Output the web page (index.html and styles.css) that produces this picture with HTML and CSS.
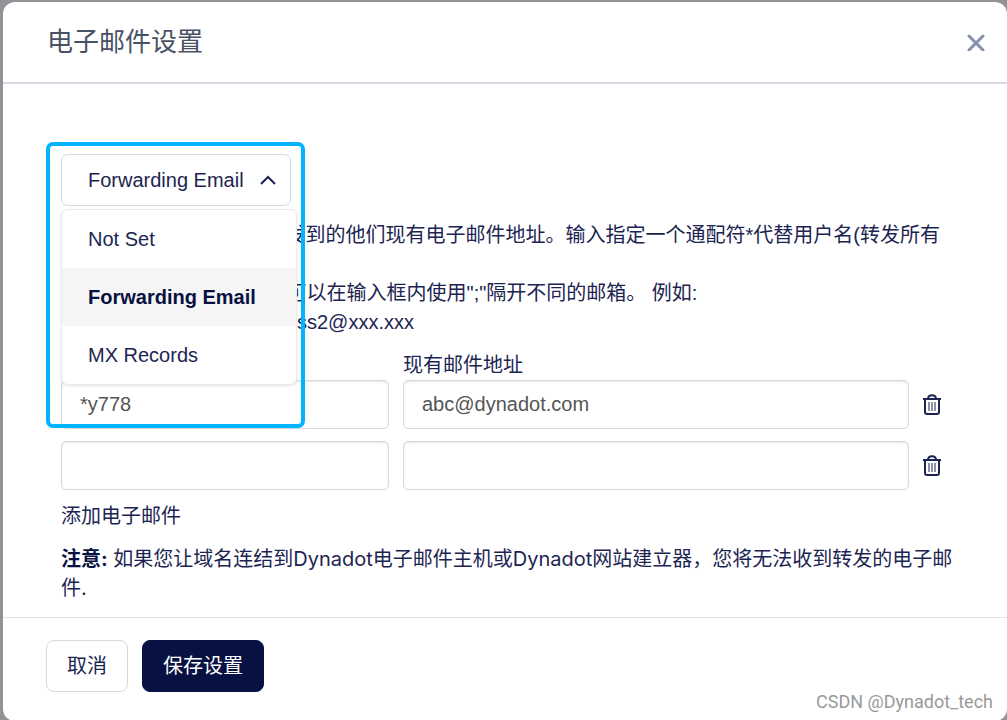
FILE: index.html
```html
<!DOCTYPE html>
<html lang="zh-CN">
<head>
    <meta charset="UTF-8">
    <meta name="viewport" content="width=device-width, initial-scale=1.0">
    <title>电子邮件设置</title>
    <link rel="stylesheet" href="styles.css">
</head>
<body>
    <div class="modal" role="dialog" aria-labelledby="modalTitle">
        <header class="modal-header">
            <h2 id="modalTitle">电子邮件设置</h2>
            <button type="button" class="close" aria-label="关闭">
                <svg width="18" height="18" viewBox="0 0 18 18"><path d="M2 3L16 17M16 3L2 17"/></svg>
            </button>
        </header>

        <form class="modal-form">
            <div class="modal-body">
                <div class="dropdown">
                    <select class="dropdown-select" aria-label="邮件类型">
                        <option>Not Set</option>
                        <option selected>Forwarding Email</option>
                        <option>MX Records</option>
                    </select>
                    <svg class="chevron" width="16" height="10" viewBox="0 0 16 10"><path d="M1 9L8 2L15 9"/></svg>
                    <ul class="dropdown-menu">
                        <li><button type="button">Not Set</button></li>
                        <li><button type="button" class="active">Forwarding Email</button></li>
                        <li><button type="button">MX Records</button></li>
                    </ul>
                    <div class="highlight"></div>
                </div>

                <p class="description">
                    请输入 (用户名) 和想要转发到的他们现有电子邮件地址。输入指定一个通配符*代替用户名(转发所有<br>
                    的邮件)。<br>
                    如果需要转发多个邮箱您 可以在输入框内使用";"隔开不同的邮箱。 例如:<br>
                    address1@xxx.xxx ; address2@xxx.xxx
                </p>

                <div class="email-grid">
                    <label for="user1">用户名</label>
                    <label for="email1" class="wide">现有邮件地址</label>

                    <input type="text" id="user1" value="*y778">
                    <input type="text" id="email1" value="abc@dynadot.com">
                    <button type="button" class="delete" aria-label="删除">
                        <svg width="18" height="22" viewBox="0 0 18 22"><path d="M0 5H18M5 5C5 0 13 0 13 5M2 5V18Q2 20 4 20H14Q16 20 16 18V5"/><path class="thin" d="M6 8V17M9 8V17M12 8V17"/></svg>
                    </button>

                    <input type="text" aria-label="用户名">
                    <input type="text" aria-label="现有邮件地址">
                    <button type="button" class="delete" aria-label="删除">
                        <svg width="18" height="22" viewBox="0 0 18 22"><path d="M0 5H18M5 5C5 0 13 0 13 5M2 5V18Q2 20 4 20H14Q16 20 16 18V5"/><path class="thin" d="M6 8V17M9 8V17M12 8V17"/></svg>
                    </button>
                </div>

                <a href="#" class="add-email">添加电子邮件</a>
                <p class="note"><strong>注意:</strong> 如果您让域名连结到Dynadot电子邮件主机或Dynadot网站建立器，您将无法收到转发的电子邮件.</p>
            </div>

            <footer class="modal-footer">
                <button type="button" class="btn">取消</button>
                <button type="submit" class="btn btn-primary">保存设置</button>
            </footer>
        </form>
        <div class="watermark">CSDN @Dynadot_tech</div>
    </div>
</body>
</html>
```

FILE: styles.css
```css
* {
    box-sizing: border-box;
}
body {
    margin: 0;
    padding: 2px 0 0 3px;
    background: #929297;
    color: #1c2552;
    font-family: "Liberation Sans", "Noto Sans CJK SC", sans-serif;
    font-size: 20px;
    line-height: 29px;
}
button, input, select {
    font: inherit;
    color: inherit;
}
button {
    cursor: pointer;
}
svg {
    display: block;
    fill: none;
    stroke: #1c2552;
    stroke-width: 2;
}
.modal {
    position: relative;
    background: #fff;
    border-radius: 12px;
}
.modal-header {
    display: flex;
    align-items: center;
    justify-content: space-between;
    height: 82px;
    padding: 0 22px 0 44px;
    border-bottom: 2px solid #d5dbe5;
}
.modal-header h2 {
    margin: 0;
    font-size: 26px;
    font-weight: 400;
    color: #495164;
}
.close, .delete {
    padding: 0;
    border: 0;
    background: none;
}
.close svg {
    stroke: #8490aa;
    stroke-width: 3;
    stroke-linecap: round;
}
.modal-body {
    padding: 70px 50px 14px 58px;
}

/* Dropdown */
.dropdown {
    position: relative;
    width: 230px;
}
.dropdown-select {
    display: block;
    width: 100%;
    height: 52px;
    padding: 0 26px;
    border: 1px solid #d3dae3;
    border-radius: 7px;
    background: #fff;
    appearance: none;
}
.chevron {
    position: absolute;
    top: 21px;
    right: 15px;
    pointer-events: none;
}
.dropdown-menu {
    position: absolute;
    top: 55px;
    left: 0;
    width: 236px;
    margin: 0;
    padding: 0;
    list-style: none;
    background: #fff;
    border: 1px solid #ebebed;
    border-radius: 7px;
    box-shadow: 0 1px 3px rgba(0, 0, 0, 0.1);
}
.dropdown-menu button {
    display: block;
    width: 100%;
    height: 58px;
    padding: 0 26px;
    border: 0;
    border-radius: 7px;
    background: none;
    text-align: left;
}
.dropdown-menu .active {
    border-radius: 0;
    background: #f5f5f5;
    color: #071142;
    font-weight: 700;
}
.highlight {
    position: absolute;
    top: -12px;
    left: -15px;
    width: 259px;
    height: 286px;
    border: 4px solid #00b4ff;
    border-radius: 7px;
    pointer-events: none;
}

.description {
    margin: 15px 0 14px;
}

/* Email rows */
.email-grid {
    display: grid;
    grid-template-columns: 328fr 506fr 34px;
    column-gap: 14px;
}
.email-grid .wide {
    grid-column: span 2;
}
.email-grid input {
    width: 100%;
    height: 49px;
    margin-bottom: 12px;
    padding: 0 18px;
    border: 1px solid #d3dae3;
    border-radius: 5px;
    background: #fff;
    color: #555;
    box-shadow: inset 0 1px 2px rgba(0, 0, 0, 0.1);
}
.delete {
    height: 49px;
}
.delete .thin {
    stroke-width: 1;
}
.add-email {
    display: block;
    color: inherit;
    text-decoration: none;
}
.note {
    margin: 14px 0 0;
    font-family: Inter, "Noto Sans CJK SC", sans-serif;
}
.note strong {
    color: #071142;
}

.modal-footer {
    display: flex;
    gap: 14px;
    padding: 22px 43px 29px;
    border-top: 1px solid #dfe5ec;
}
.btn {
    height: 52px;
    padding: 0 20px;
    border: 1px solid #d3dae3;
    border-radius: 8px;
    background: #fff;
}
.btn-primary {
    border-color: #071142;
    background: #071142;
    color: #fff;
}
.watermark {
    position: absolute;
    right: 14px;
    bottom: 5px;
    color: #999;
    font-family: Roboto, sans-serif;
    font-size: 18px;
}
```
